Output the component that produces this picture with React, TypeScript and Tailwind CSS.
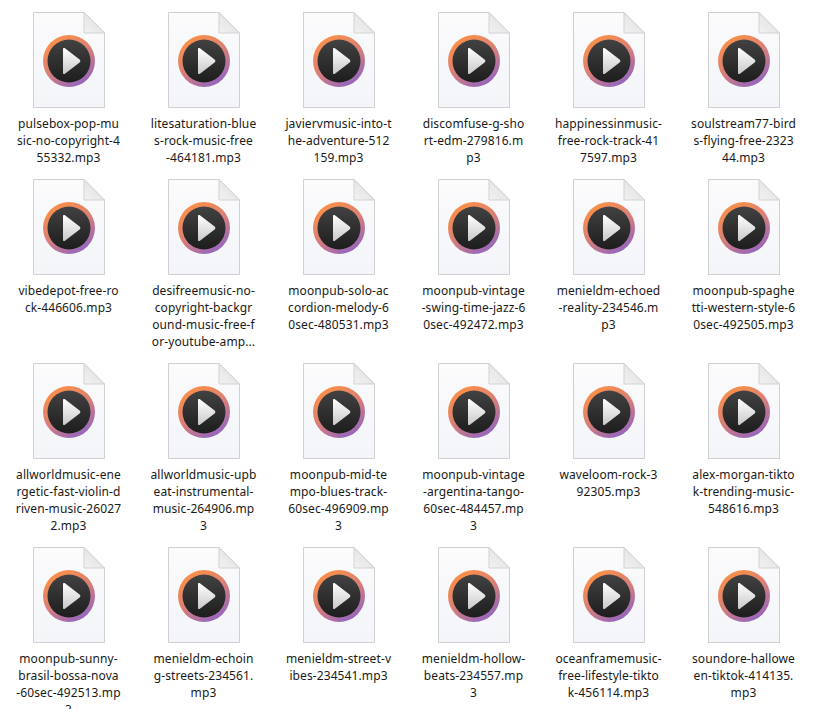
import { useId } from "react";

const files: string[][] = [
  ["pulsebox-pop-mu", "sic-no-copyright-4", "55332.mp3"],
  ["litesaturation-blue", "s-rock-music-free", "-464181.mp3"],
  ["javiervmusic-into-t", "he-adventure-512", "159.mp3"],
  ["discomfuse-g-sho", "rt-edm-279816.m", "p3"],
  ["happinessinmusic-", "free-rock-track-41", "7597.mp3"],
  ["soulstream77-bird", "s-flying-free-2323", "44.mp3"],
  ["vibedepot-free-ro", "ck-446606.mp3"],
  ["desifreemusic-no-", "copyright-backgr", "ound-music-free-f", "or-youtube-amp..."],
  ["moonpub-solo-ac", "cordion-melody-6", "0sec-480531.mp3"],
  ["moonpub-vintage", "-swing-time-jazz-6", "0sec-492472.mp3"],
  ["menieldm-echoed", "-reality-234546.m", "p3"],
  ["moonpub-spaghe", "tti-western-style-6", "0sec-492505.mp3"],
  ["allworldmusic-ene", "rgetic-fast-violin-d", "riven-music-26027", "2.mp3"],
  ["allworldmusic-upb", "eat-instrumental-", "music-264906.mp", "3"],
  ["moonpub-mid-te", "mpo-blues-track-", "60sec-496909.mp", "3"],
  ["moonpub-vintage", "-argentina-tango-", "60sec-484457.mp", "3"],
  ["waveloom-rock-3", "92305.mp3"],
  ["alex-morgan-tikto", "k-trending-music-", "548616.mp3"],
  ["moonpub-sunny-", "brasil-bossa-nova", "-60sec-492513.mp", "3"],
  ["menieldm-echoin", "g-streets-234561.", "mp3"],
  ["menieldm-street-v", "ibes-234541.mp3"],
  ["menieldm-hollow-", "beats-234557.mp", "3"],
  ["oceanframemusic-", "free-lifestyle-tikto", "k-456114.mp3"],
  ["soundore-hallowe", "en-tiktok-414135.", "mp3"],
];

function AudioFileIcon() {
  const id = useId();
  return (
    <svg width="72" height="97" viewBox="0 0 72 97" className="block">
      <defs>
        <linearGradient id={id + "page"} x1="0" y1="0" x2="0" y2="1">
          <stop offset="0" stopColor="#fbfbfc" />
          <stop offset="1" stopColor="#f3f5f9" />
        </linearGradient>
        <linearGradient id={id + "fold"} x1="0" y1="1" x2="1" y2="0">
          <stop offset="0" stopColor="#f2f2f2" />
          <stop offset="1" stopColor="#dcdcdc" />
        </linearGradient>
        <linearGradient id={id + "ring"} x1="0.2" y1="0" x2="0.8" y2="1">
          <stop offset="0" stopColor="#ff9243" />
          <stop offset="0.5" stopColor="#d97f78" />
          <stop offset="1" stopColor="#8c62c8" />
        </linearGradient>
        <linearGradient id={id + "disc"} x1="0" y1="0" x2="0" y2="1">
          <stop offset="0" stopColor="#424242" />
          <stop offset="1" stopColor="#1d1d1d" />
        </linearGradient>
        <linearGradient id={id + "play"} x1="0" y1="0" x2="0" y2="1">
          <stop offset="0" stopColor="#ffffff" />
          <stop offset="1" stopColor="#c9c9c9" />
        </linearGradient>
      </defs>
      <path d="M0.5 0.5H51L71.5 21V95.5H0.5Z" fill={`url(#${id}page)`} stroke="#cfd0d2" />
      <path d="M51 0.5V21H71.5Z" fill={`url(#${id}fold)`} stroke="#d2d2d2" />
      <circle cx="36" cy="49" r="26" fill={`url(#${id}ring)`} />
      <circle cx="36" cy="49" r="21.5" fill={`url(#${id}disc)`} />
      <path d="M30 37C30 36 30.8 35.6 31.6 36.1L46.6 47.6C47.6 48.3 47.6 49.7 46.6 50.4L31.6 61.9C30.8 62.4 30 62 30 61Z" fill={`url(#${id}play)`} />
    </svg>
  );
}

export default function App() {
  return (
    <div className="h-[709px] w-[819px] overflow-hidden bg-white pl-[1px] pt-[12px] font-['Noto_Sans','Noto_Sans_CJK_SC',sans-serif] text-[12px] leading-[17px] tracking-[0.1px] text-[#1a1a1a]">
      <div className="grid grid-cols-[repeat(6,135px)] auto-rows-auto">
        {files.map((lines, i) => (
          <div key={i} className="flex flex-col items-center pb-[13px]">
            <AudioFileIcon />
            <div className="mt-[6px] w-[130px] whitespace-nowrap text-center">
              {lines.map((line, j) => (
                <div key={j}>{line}</div>
              ))}
            </div>
          </div>
        ))}
      </div>
    </div>
  );
}
